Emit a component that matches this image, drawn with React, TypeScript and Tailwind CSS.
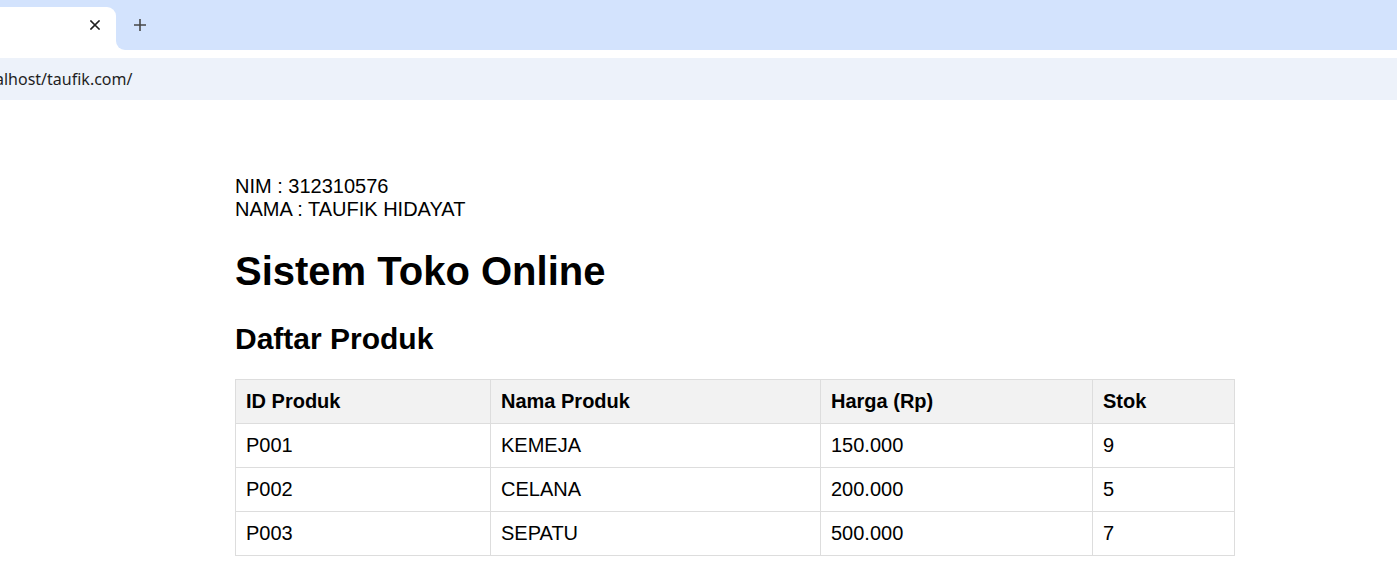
import React from "react";

const rows = [
  ["P001", "KEMEJA", "150.000", "9"],
  ["P002", "CELANA", "200.000", "5"],
  ["P003", "SEPATU", "500.000", "7"],
];

export default function App() {
  return (
    <div className="w-[1397px] h-[580px] overflow-hidden bg-white">
      {/* tab strip */}
      <div className="h-[50px] bg-[#d3e3fd] flex items-end">
        <div className="h-[43px] w-[116px] bg-white rounded-tr-[9px] relative">
          <svg className="absolute left-[90px] top-[13px]" width="10" height="10" viewBox="0 0 10 10">
            <path d="M1 1L9 9M9 1L1 9" stroke="#1f1f1f" strokeWidth="1.6" strokeLinecap="square" />
          </svg>
        </div>
        <div className="flex-1 h-full bg-white">
          <div className="h-full bg-[#d3e3fd] rounded-bl-[9px] relative">
            <svg className="absolute left-[18px] top-[19px]" width="12" height="12" viewBox="0 0 12 12">
              <path d="M6 0V12M0 6H12" stroke="#474747" strokeWidth="1.6" />
            </svg>
          </div>
        </div>
      </div>
      {/* toolbar */}
      <div className="h-[50px] bg-white pt-[8px]">
        <div className="h-[42px] bg-[#edf2fa] flex items-center overflow-hidden">
          <span
            className="ml-[-5px] text-[16px] text-[#1f1f1f] whitespace-nowrap"
            style={{ fontFamily: '"Noto Sans", "Open Sans", sans-serif' }}
          >
            alhost/taufik.com/
          </span>
        </div>
      </div>
      {/* page */}
      <div
        className="pl-[235px] pt-[75px] text-black"
        style={{ fontFamily: '"Liberation Sans", Arial, sans-serif' }}
      >
        <div className="text-[20px] leading-[23px]">
          <div>NIM : 312310576</div>
          <div>NAMA : TAUFIK HIDAYAT</div>
        </div>
        <h1 className="mt-[27px] text-[40px] leading-[46px] font-bold">Sistem Toko Online</h1>
        <h2 className="mt-[27px] text-[30px] leading-[35px] font-bold">Daftar Produk</h2>
        <table className="mt-[23px] w-[999px] table-fixed border-collapse border border-[#dddddd] text-[20px] leading-[23px]">
          <colgroup>
            <col className="w-[255px]" />
            <col className="w-[330px]" />
            <col className="w-[272px]" />
            <col className="w-[142px]" />
          </colgroup>
          <thead>
            <tr className="bg-[#f2f2f2]">
              {["ID Produk", "Nama Produk", "Harga (Rp)", "Stok"].map((h) => (
                <th key={h} className="border border-[#dddddd] px-[10px] py-[10px] text-left font-bold">
                  {h}
                </th>
              ))}
            </tr>
          </thead>
          <tbody>
            {rows.map((r) => (
              <tr key={r[0]}>
                {r.map((c, i) => (
                  <td key={i} className="border border-[#dddddd] px-[10px] py-[10px]">
                    {c}
                  </td>
                ))}
              </tr>
            ))}
          </tbody>
        </table>
      </div>
    </div>
  );
}
